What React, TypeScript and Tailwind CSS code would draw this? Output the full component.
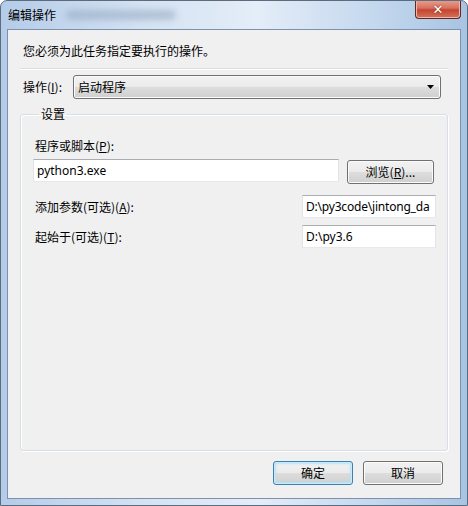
const ui = "font-['Microsoft_YaHei','Noto_Sans_CJK_SC',sans-serif] text-[12px] leading-[16px] text-black";
const latin = "font-['Segoe_UI','Noto_Sans','Noto_Sans_CJK_SC',sans-serif]";

const TextBox = ({ value, className }: { value: string; className: string }) => (
    <div
        className={`h-[23px] bg-white border border-[#abadb3] border-l-[#e2e3ea] border-r-[#e2e3ea] border-b-[#e3e9ef] pl-[3px] flex items-center overflow-hidden whitespace-nowrap ${latin} text-[12px] ${className}`}
    >
        {value}
    </div>
);

const Button = ({ label, primary, className }: { label: React.ReactNode; primary?: boolean; className: string }) => (
    <div
        className={`h-[24px] rounded-[3px] border flex items-center justify-center bg-[linear-gradient(#f2f2f2,#ebebeb_48%,#dddddd_52%,#cfcfcf)] ${
            primary
                ? "border-[#3c7fb1] shadow-[inset_0_0_0_1px_#c6ecfb,inset_0_0_2px_2px_#b6e2f7]"
                : "border-[#707070] shadow-[inset_0_0_0_1px_#fbfbfb]"
        } ${className}`}
    >
        {label}
    </div>
);

export default function App() {
    return (
        <div className={`w-[468px] h-[506px] flex flex-col border border-[#5d6b7f] rounded-t-[7px] overflow-hidden bg-[linear-gradient(90deg,#b4cce8,#d4e2f2_30%,#e4edf8_55%,#c4d8ee_80%,#a8c4e3)] ${ui}`}>
            {/* title bar */}
            <div className="h-[28px] flex items-start justify-between">
                <div className="flex items-center mt-[6px] ml-[7px]">
                    <span className="text-[12px]">编辑操作</span>
                    <div className="ml-[10px] w-[110px] h-[10px] rounded-full bg-[#8ea3bd] opacity-50 blur-[3px]" />
                </div>
                <div className="w-[46px] h-[19px] mr-[6px] -mt-px rounded-b-[4px] border border-[#5d2b23] border-t-0 bg-[linear-gradient(#e8a190,#d7705d_45%,#c4452f_55%,#d5735a)] shadow-[inset_0_0_0_1px_#f0b5a8] flex items-center justify-center">
                    <span className="text-white font-bold text-[13px] leading-none font-['DejaVu_Sans',sans-serif] [text-shadow:0_0_2px_#6b2a20]">✕</span>
                </div>
            </div>

            {/* client area */}
            <div className="flex-1 mx-[6px] mb-[6px] border border-[#7c91ad] bg-[#f0f0f0] flex flex-col">
                <p className="mt-[13px] ml-[15px]">您必须为此任务指定要执行的操作。</p>
                <div className="mt-[9px] mx-[12px] border-t border-[#d5dfe5] border-b border-b-white" />

                <div className="mt-[5px] ml-[15px] mr-[19px] flex items-center">
                    <span className="w-[50px]">
                        操作(<u>I</u>):
                    </span>
                    <div className="flex-1 h-[24px] rounded-[3px] border border-[#707070] shadow-[inset_0_0_0_1px_#fbfbfb] bg-[linear-gradient(#f2f2f2,#ebebeb_48%,#dddddd_52%,#cfcfcf)] flex items-center justify-between pl-[4px] pr-[6px]">
                        <span>启动程序</span>
                        <svg width="7" height="4" viewBox="0 0 7 4">
                            <path d="M0 0h7L3.5 4z" fill="#000" />
                        </svg>
                    </div>
                </div>

                <fieldset className="mt-[7px] mx-[12px] h-[345px] border border-[#d5dfe5] rounded-[3px] shadow-[inset_1px_1px_0_#fff,1px_1px_0_#fff] pl-[12px] pr-[11px]">
                    <legend className="ml-[6px] px-[2px]">设置</legend>
                    <div className="mt-[16px] ml-[2px]">
                        程序或脚本(<u>P</u>):
                    </div>
                    <div className="mt-[5px] flex items-start">
                        <TextBox value="python3.exe" className="w-[306px]" />
                        <Button label={<span>浏览(<u>R</u>)...</span>} className="ml-[8px] mt-px w-[87px]" />
                    </div>
                    <div className="mt-[11px] flex items-center">
                        <span className="flex-1 ml-[2px]">
                            添加参数(可选)(<u>A</u>):
                        </span>
                        <TextBox value="D:\py3code\jintong_da" className="w-[134px] h-[22px] tracking-[-0.2px]" />
                    </div>
                    <div className="mt-[7px] flex items-center">
                        <span className="flex-1 ml-[2px]">
                            起始于(可选)(<u>T</u>):
                        </span>
                        <TextBox value="D:\py3.6" className="w-[134px] h-[22px]" />
                    </div>
                </fieldset>

                <div className="mt-[10px] mr-[17px] flex justify-end gap-[10px]">
                    <Button label="确定" primary className="w-[80px]" />
                    <Button label="取消" className="w-[80px]" />
                </div>
            </div>
        </div>
    );
}
